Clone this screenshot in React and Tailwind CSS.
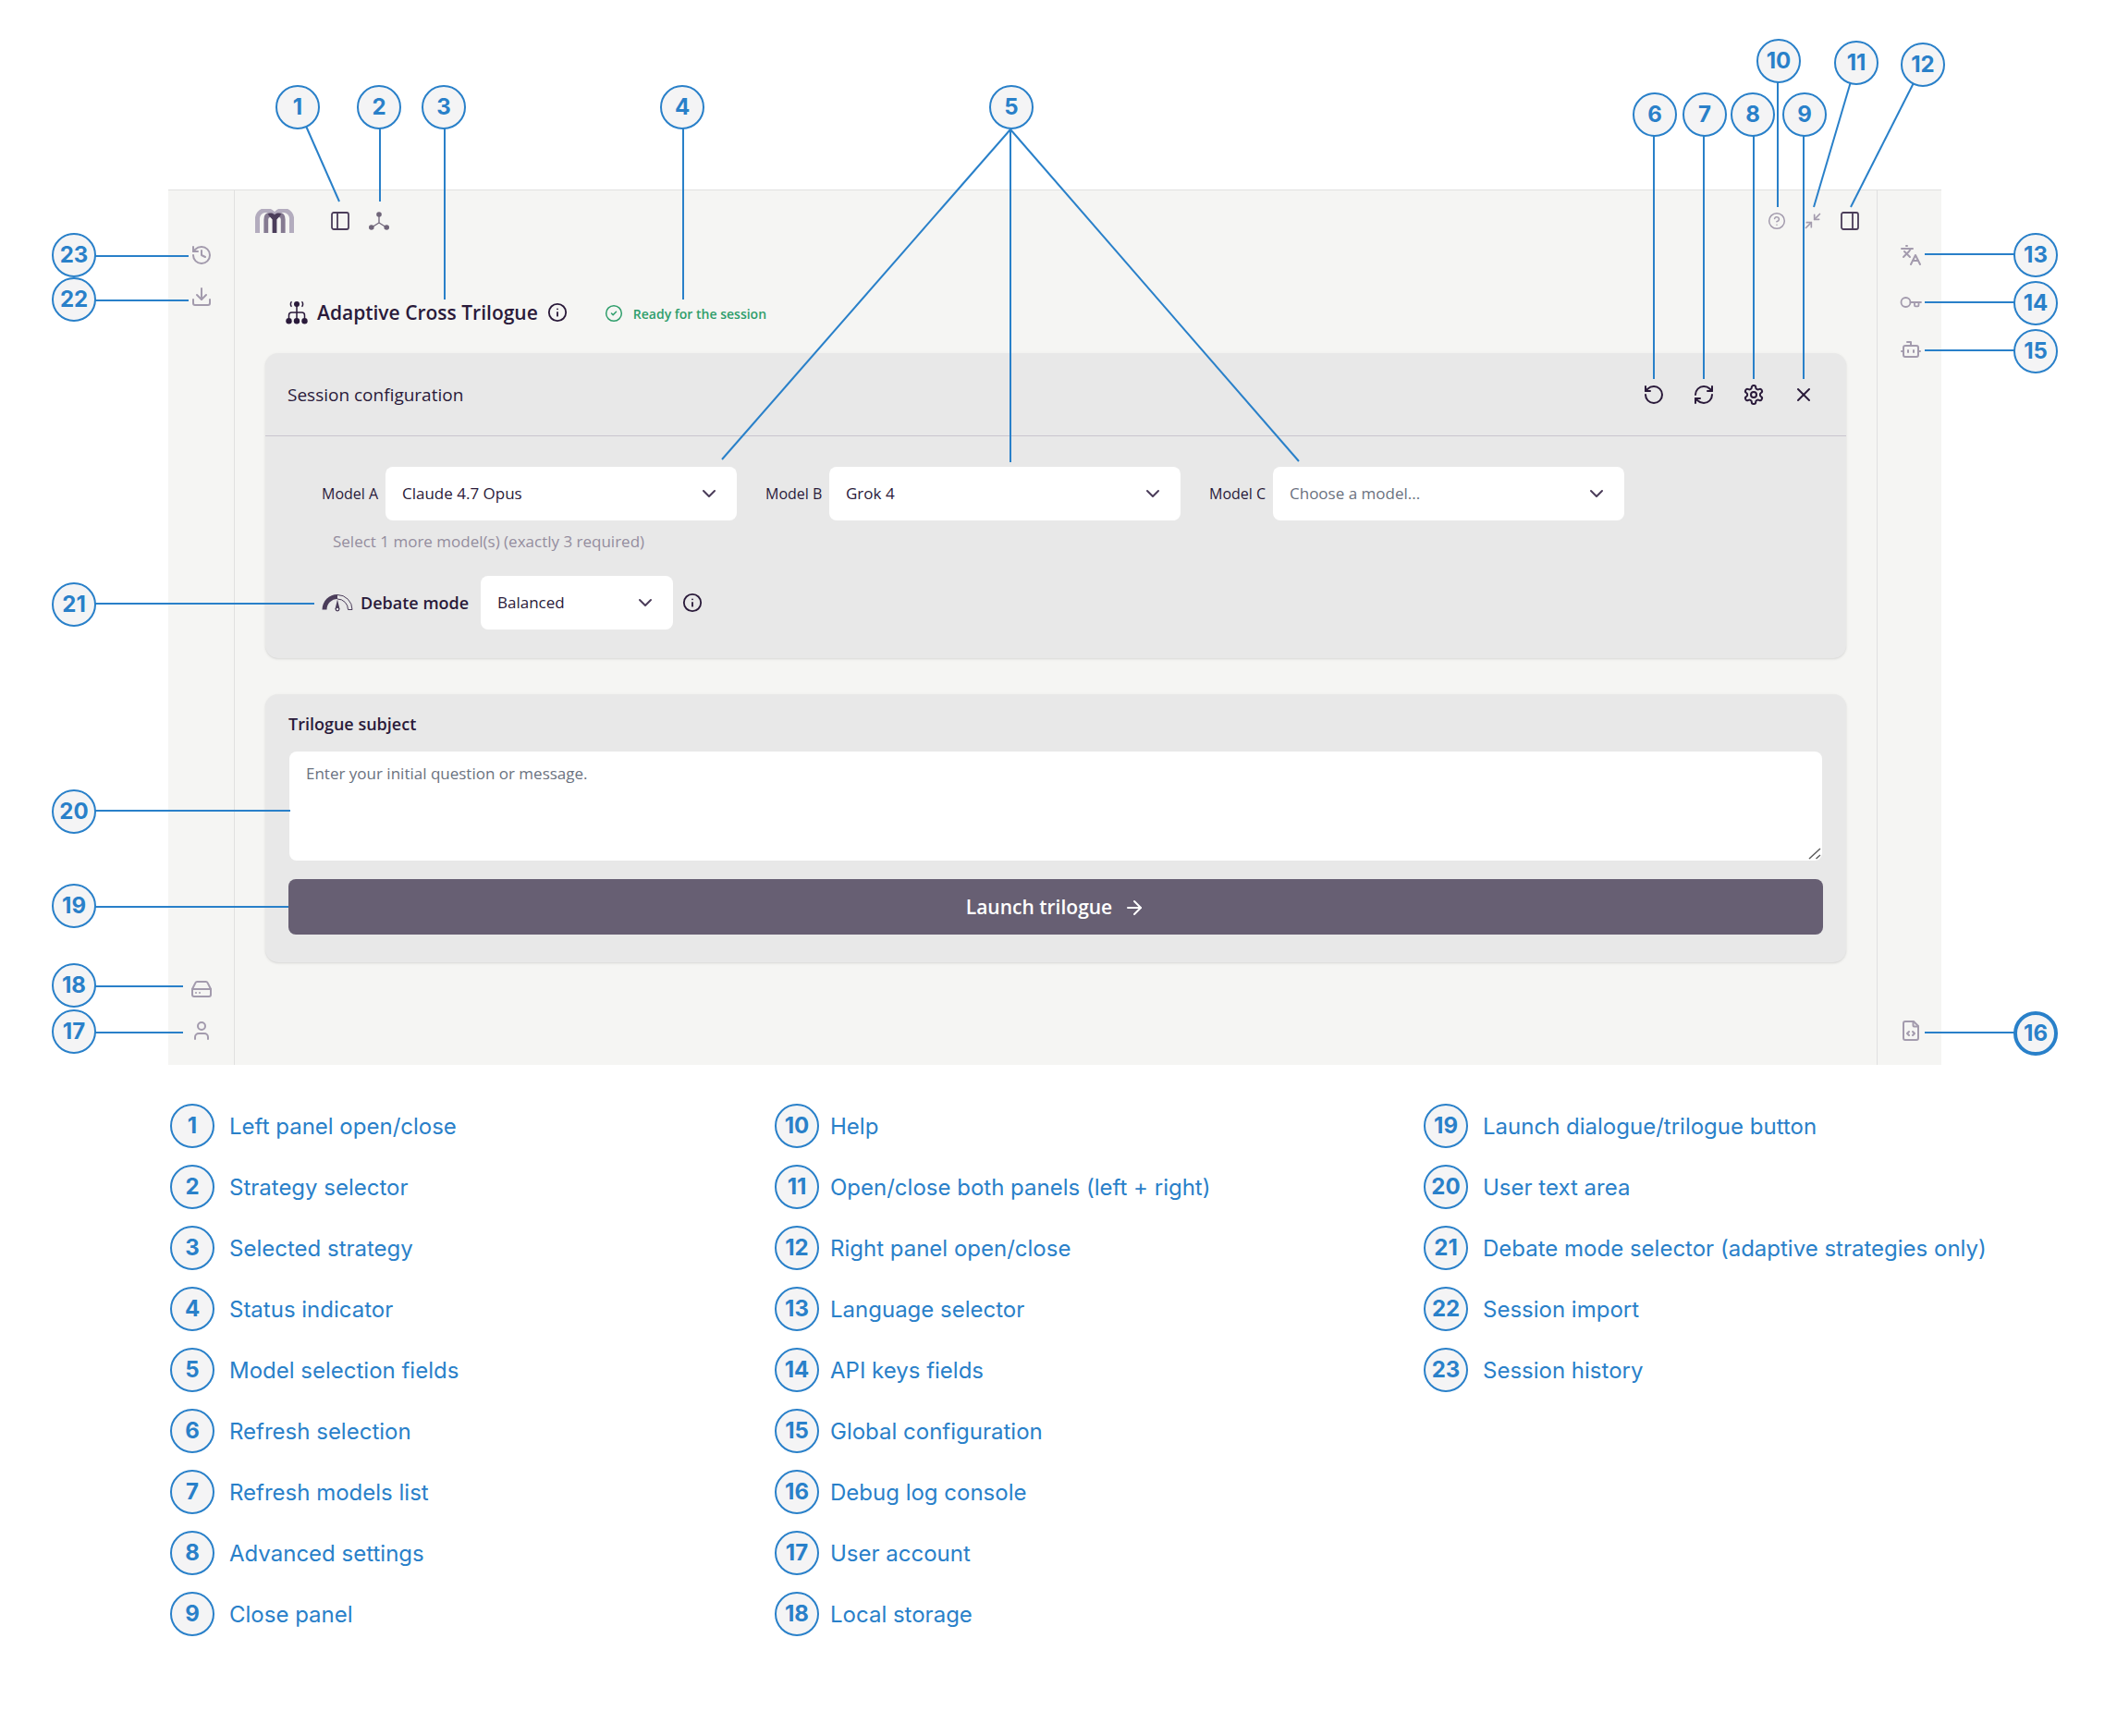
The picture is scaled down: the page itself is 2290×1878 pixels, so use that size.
import React from "react";
import {
  ArrowRight,
  Bot,
  ChevronDown,
  CircleCheck,
  CircleHelp,
  Download,
  HardDrive,
  History,
  Info,
  Languages,
  Minimize2,
  PanelLeft,
  PanelRight,
  RefreshCw,
  RotateCcw,
  User,
  X,
} from "lucide-react";

const LEGEND = [
  [
    [1, "Left panel open/close"],
    [2, "Strategy selector"],
    [3, "Selected strategy"],
    [4, "Status indicator"],
    [5, "Model selection fields"],
    [6, "Refresh selection"],
    [7, "Refresh models list"],
    [8, "Advanced settings"],
    [9, "Close panel"],
  ],
  [
    [10, "Help"],
    [11, "Open/close both panels (left + right)"],
    [12, "Right panel open/close"],
    [13, "Language selector"],
    [14, "API keys fields"],
    [15, "Global configuration"],
    [16, "Debug log console"],
    [17, "User account"],
    [18, "Local storage"],
  ],
  [
    [19, "Launch dialogue/trilogue button"],
    [20, "User text area"],
    [21, "Debate mode selector (adaptive strategies only)"],
    [22, "Session import"],
    [23, "Session history"],
  ],
];

/* Callouts: number, centre of the badge, and the ends of its leader lines. */
const CALLOUTS = [
  { n: 1, x: 322, y: 116, to: [[367, 218]] },
  { n: 2, x: 410, y: 116, to: [[411, 218]] },
  { n: 3, x: 480, y: 116, to: [[481, 324]] },
  { n: 4, x: 738, y: 116, to: [[739, 324]] },
  { n: 5, x: 1094, y: 116, from: [1093, 140], to: [[781, 497], [1093, 500], [1405, 499]] },
  { n: 6, x: 1790, y: 124, to: [[1789, 410]] },
  { n: 7, x: 1844, y: 124, to: [[1843, 410]] },
  { n: 8, x: 1896, y: 124, to: [[1897, 410]] },
  { n: 9, x: 1952, y: 124, to: [[1951, 410]] },
  { n: 10, x: 1924, y: 66, to: [[1923, 224]] },
  { n: 11, x: 2008, y: 68, to: [[1962, 224]] },
  { n: 12, x: 2080, y: 70, to: [[2002, 224]] },
  { n: 13, x: 2202, y: 276, to: [[2082, 275]] },
  { n: 14, x: 2202, y: 328, to: [[2082, 327]] },
  { n: 15, x: 2202, y: 380, to: [[2082, 379]] },
  { n: 16, x: 2202, y: 1118, to: [[2082, 1117]], strong: true },
  { n: 17, x: 80, y: 1116, to: [[198, 1117]] },
  { n: 18, x: 80, y: 1066, to: [[198, 1067]] },
  { n: 19, x: 80, y: 980, to: [[312, 981]] },
  { n: 20, x: 80, y: 878, to: [[314, 877]] },
  { n: 21, x: 80, y: 654, to: [[340, 653]] },
  { n: 22, x: 80, y: 324, to: [[204, 325]] },
  { n: 23, x: 80, y: 276, to: [[204, 277]] },
];

/* Start of a leader: straight out of the badge when the line is axis-aligned. */
function leaderStart({ x, y, from }, [tx, ty]) {
  if (from) return from;
  if (Math.abs(tx - x) <= 2) return [tx, y];
  if (Math.abs(ty - y) <= 2) return [x, ty];
  return [x, y];
}

function Badge({ n, strong = false }) {
  return (
    <span
      className={
        (strong ? "border-4" : "border-2") +
        " flex size-12 shrink-0 items-center justify-center rounded-full border-[#2980c9] bg-[#f4f4f5] text-2xl leading-none font-bold text-[#2980c9]"
      }
    >
      {n}
    </span>
  );
}

function Callouts() {
  return (
    <div className="pointer-events-none absolute inset-0 overflow-hidden">
      <svg className="absolute inset-0 size-full" fill="none" stroke="#2980c9" strokeWidth="2">
        {CALLOUTS.flatMap((c) =>
          c.to.map((end) => {
            const start = leaderStart(c, end);
            return (
              <line key={`${c.n}-${end[0]}`} x1={start[0]} y1={start[1]} x2={end[0]} y2={end[1]} />
            );
          })
        )}
      </svg>
      {CALLOUTS.map((c) => (
        <div key={c.n} className="absolute" style={{ left: c.x - 24, top: c.y - 24 }}>
          <Badge n={c.n} strong={c.strong} />
        </div>
      ))}
    </div>
  );
}

function Logo() {
  return (
    <svg viewBox="0 0 42 26" className="h-[26px] w-[42px]" fill="none" aria-label="Home">
      <g stroke="#b3acbe" strokeWidth="5">
        <path d="M2.5 26V12A9.2 9.2 0 0 1 21 9.5" />
        <path d="M39.5 26V12A9.2 9.2 0 0 0 21 9.5" />
      </g>
      <path d="M11.8 26V11.5C11.8 8 13.5 6.5 16 6.500S21 8.500 21 11" stroke="#857a91" strokeWidth="4.8" />
      <path d="M30.2 26V11.500C30.200 8 28.500 6.500 26 6.500S21 8.500 21 11" stroke="#857a91" strokeWidth="4.800" />
      <path d="M18.600 26V11.500L13.500 5.500C16.500 4 19.500 4.500 21 6.500C22.500 4.500 25.500 4 28.500 5.500L23.400 11.500V26Z" fill="#4b3d5a" />
    </svg>
  );
}

function StrategyIcon() {
  return (
    <svg viewBox="0 0 22 20" className="h-5 w-[22px]" fill="#6f6579" stroke="#6f6579">
      <path d="M11 3v9M11 12 3 17M11 12l8 5" strokeWidth="1.300" fill="none" />
      <g stroke="none">
        <circle cx="11" cy="3" r="2.800" />
        <circle cx="2.800" cy="17" r="2.800" />
        <circle cx="19.200" cy="17" r="2.800" />
      </g>
    </svg>
  );
}

function TrilogueIcon() {
  return (
    <svg viewBox="0 0 24 26" className="h-[26px] w-6" fill="none" stroke="#2a1a3a" strokeWidth="1.500">
      <path d="M12 4v18M3.500 21v-5a3 3 0 0 1 3-3h11a3 3 0 0 1 3 3v5" />
      <path d="M6.500 1.200C5 2.500 5 5.500 6.500 6.800M17.500 1.200C19 2.500 19 5.500 17.500 6.800" strokeWidth="1.500" />
      <g fill="#2a1a3a" stroke="none">
        <circle cx="12" cy="4" r="3" />
        <circle cx="3.500" cy="22.300" r="3.200" />
        <circle cx="12" cy="22.300" r="3.200" />
        <circle cx="20.500" cy="22.300" r="3.200" />
      </g>
    </svg>
  );
}

function GaugeIcon() {
  return (
    <svg viewBox="0 0 34 20" className="h-5 w-[34px]" fill="none" stroke="#4b3d5a">
      <path d="M.5 17.500A16.500 16.500 0 0 1 17 1V6A11.500 11.500 0 0 0 5.500 17.500Z" fill="#4b3d5a" stroke="none" />
      <path d="M17 1.500A16 16 0 0 1 33 17.500H28.500A11.500 11.500 0 0 0 17 6" />
      <path d="M17 6.500 14.600 16.500a2.400 2.400 0 1 0 4.800 0Z" fill="#4b3d5a" stroke="none" />
      <circle cx="17" cy="17" r="1.800" fill="#e8e8e8" strokeWidth="1.200" />
    </svg>
  );
}

function SettingsIcon() {
  return (
    <svg viewBox="0 0 24 24" className="size-6" fill="none" stroke="currentColor" strokeWidth="2" strokeLinecap="round" strokeLinejoin="round">
      <path d="M12.220 2h-.44a2 2 0 0 0-2 2v.18a2 2 0 0 1-1 1.730l-.43.25a2 2 0 0 1-2 0l-.15-.08a2 2 0 0 0-2.730.73l-.22.38a2 2 0 0 0 .73 2.730l.15.1a2 2 0 0 1 1 1.720v.51a2 2 0 0 1-1 1.740l-.15.09a2 2 0 0 0-.73 2.730l.22.38a2 2 0 0 0 2.730.73l.15-.08a2 2 0 0 1 2 0l.43.25a2 2 0 0 1 1 1.730V20a2 2 0 0 0 2 2h.44a2 2 0 0 0 2-2v-.18a2 2 0 0 1 1-1.730l.43-.25a2 2 0 0 1 2 0l.15.08a2 2 0 0 0 2.730-.73l.22-.39a2 2 0 0 0-.73-2.730l-.15-.08a2 2 0 0 1-1-1.740v-.5a2 2 0 0 1 1-1.740l.15-.09a2 2 0 0 0 .73-2.730l-.22-.38a2 2 0 0 0-2.730-.73l-.15.08a2 2 0 0 1-2 0l-.43-.25a2 2 0 0 1-1-1.730V4a2 2 0 0 0-2-2z" />
      <circle cx="12" cy="12" r="3" />
    </svg>
  );
}

function KeyIcon() {
  return (
    <svg viewBox="0 0 24 24" className="size-6" fill="none" stroke="currentColor" strokeWidth="1.800" strokeLinecap="round">
      <circle cx="6.500" cy="12" r="5" />
      <path d="M11.500 12H23M16 12v3.300a1 1 0 0 0 1 1h2.500a1 1 0 0 0 1-1V12" />
    </svg>
  );
}

function FileCodeIcon() {
  return (
    <svg viewBox="0 0 24 24" className="size-6" fill="none" stroke="currentColor" strokeWidth="2" strokeLinecap="round" strokeLinejoin="round">
      <path d="M15 2H6a2 2 0 0 0-2 2v16a2 2 0 0 0 2 2h12a2 2 0 0 0 2-2V7Z" />
      <path d="M14.500 2v4.500a1 1 0 0 0 1 1H20M10 13l-2 2 2 2M14 13l2 2-2 2" />
    </svg>
  );
}

function IconButton({ label, className = "", children }) {
  return (
    <button type="button" aria-label={label} className={"flex items-center justify-center " + className}>
      {children}
    </button>
  );
}

function Select({ id, value, muted = false, className = "" }) {
  return (
    <div className={"relative " + className}>
      <select
        id={id}
        defaultValue={value}
        className={
          (muted ? "text-[#6b7280]" : "text-[#2a1a3a]") +
          " h-[58px] w-full appearance-none rounded-lg bg-white pr-12 pl-[18px] text-[17px]"
        }
      >
        <option>{value}</option>
      </select>
      <ChevronDown
        className="pointer-events-none absolute top-[17px] right-[18px] size-6 text-[#4b3d5a]"
        strokeWidth={2}
      />
    </div>
  );
}

function ModelField({ name, value, muted }) {
  const id = "model-" + name.toLowerCase();
  return (
    <div className="flex items-center">
      <label htmlFor={id} className="w-[69px] shrink-0 text-base whitespace-nowrap">
        Model {name}
      </label>
      <Select id={id} value={value} muted={muted} className="flex-1" />
    </div>
  );
}

export default function App() {
  return (
    <div className="relative min-h-screen bg-white pt-[205px] pb-[102px] font-['Inter',sans-serif]">
      <div className="mr-[190px] ml-[182px] flex border-t border-[#e0e0e0] bg-[#f5f5f3] font-['Open_Sans',sans-serif] text-[#2a1a3a]">
        <aside className="flex w-[72px] shrink-0 flex-col items-center border-r border-[#e0e0e0] pt-[58px] pb-[25px] text-[#a39bad]">
          <IconButton label="Session history"><History /></IconButton>
          <IconButton label="Session import" className="mt-[21px]"><Download /></IconButton>
          <IconButton label="Local storage" className="mt-auto"><HardDrive /></IconButton>
          <IconButton label="User account" className="mt-[21px]"><User /></IconButton>
        </aside>

        <main className="min-w-0 flex-1 pb-[111px]">
          <header className="flex h-[66px] items-center justify-between pr-[17px] pl-[22px]">
            <div className="flex items-center">
              <Logo />
              <IconButton label="Left panel" className="ml-[38px] text-[#4b3d5a]"><PanelLeft strokeWidth={1.800} /></IconButton>
              <IconButton label="Strategy" className="ml-[19px]"><StrategyIcon /></IconButton>
            </div>
            <div className="flex items-center text-[#a39bad]">
              <IconButton label="Help"><CircleHelp size={20} strokeWidth={1.800} /></IconButton>
              <IconButton label="Toggle both panels" className="ml-[19px]"><Minimize2 size={20} strokeWidth={2} /></IconButton>
              <IconButton label="Right panel" className="ml-[18px] text-[#4b3d5a]"><PanelRight strokeWidth={1.800} /></IconButton>
            </div>
          </header>

          <div className="px-[33px]">
            <div className="mt-[46px] flex h-10 items-center pl-[22px]">
              <TrilogueIcon />
              <h1 className="ml-[10px] pt-0.5 text-[21px] font-semibold">Adaptive Cross Trilogue</h1>
              <IconButton label="About this strategy" className="ml-[10px]"><Info size={22} strokeWidth={2} /></IconButton>
              <p className="ml-[40px] flex items-center gap-[11px] pt-0.5 text-[14px] font-semibold text-[#2f9e6b]">
                <CircleCheck size={20} strokeWidth={1.800} />
                Ready for the session
              </p>
            </div>

            <section className="mt-[24px] rounded-[14px] bg-[#e8e8e8] shadow-sm">
              <div className="flex h-[90px] items-center justify-between border-b border-[#c9c5ce] px-6">
                <h2 className="pt-px text-[19px] font-medium">Session configuration</h2>
                <div className="flex gap-[10px]">
                  <IconButton label="Refresh selection" className="size-11"><RotateCcw /></IconButton>
                  <IconButton label="Refresh models list" className="size-11"><RefreshCw /></IconButton>
                  <IconButton label="Advanced settings" className="size-11"><SettingsIcon /></IconButton>
                  <IconButton label="Close panel" className="size-11"><X /></IconButton>
                </div>
              </div>
              <div className="px-[61px] pt-[33px] pb-[31px]">
                <div className="grid max-w-[1409px] grid-cols-3 gap-[31px]">
                  <ModelField name="A" value="Claude 4.7 Opus" />
                  <ModelField name="B" value="Grok 4" />
                  <ModelField name="C" value="Choose a model..." muted />
                </div>
                <p className="mt-[11px] ml-3 text-[17px] leading-6 text-[#948d9e]">
                  Select 1 more model(s) (exactly 3 required)
                </p>
                <div className="mt-[25px] flex items-center">
                  <GaugeIcon />
                  <label htmlFor="debate-mode" className="ml-[8px] w-[130px] text-[18px] font-semibold whitespace-nowrap">
                    Debate mode
                  </label>
                  <Select id="debate-mode" value="Balanced" className="w-[208px]" />
                  <IconButton label="About debate modes" className="ml-[10px]"><Info size={22} strokeWidth={2} /></IconButton>
                </div>
              </div>
            </section>

            <section className="mt-[39px] rounded-[14px] bg-[#e8e8e8] px-[25px] pt-5 pb-[30px] shadow-sm">
              <label htmlFor="subject" className="block text-[18px] leading-6 font-semibold">
                Trilogue subject
              </label>
              <div className="relative mx-px mt-[18px]">
                <textarea
                  id="subject"
                  placeholder="Enter your initial question or message."
                  className="block h-[118px] w-full resize-none rounded-lg bg-white px-[18px] py-3 text-[17px] leading-6 placeholder:text-[#6b7280]"
                />
                <svg viewBox="0 0 14 14" className="pointer-events-none absolute right-px bottom-px size-[14px]" fill="none" stroke="#5b5b5b" strokeWidth="1.500">
                  <path d="M1 13 13 2M8.500 13 13 9" />
                </svg>
              </div>
              <button
                type="button"
                className="mt-5 flex h-[60px] w-full items-center justify-center gap-3 rounded-lg bg-[#675f73] pt-0.5 text-[21px] font-semibold text-white"
              >
                Launch trilogue
                <ArrowRight size={24} strokeWidth={2} />
              </button>
            </section>
          </div>
        </main>

        <aside className="flex w-[70px] shrink-0 flex-col items-center border-l border-[#e0e0e0] pt-[58px] pb-[25px] pl-[2px] text-[#a39bad]">
          <IconButton label="Language"><Languages /></IconButton>
          <IconButton label="API keys" className="mt-[27px]"><KeyIcon /></IconButton>
          <IconButton label="Global configuration" className="mt-[27px]"><Bot /></IconButton>
          <IconButton label="Debug log console" className="mt-auto"><FileCodeIcon /></IconButton>
        </aside>
      </div>

      <div className="mt-[42px] grid grid-cols-[minmax(0,654fr)_minmax(0,702fr)_minmax(0,566fr)] px-[184px]">
        {LEGEND.map((column, i) => (
          <ul key={i} className="flex flex-col gap-[18px]">
            {column.map(([n, text]) => (
              <li
                key={n}
                className={(i === 1 ? "gap-3" : "gap-4") + " flex items-center text-2xl whitespace-nowrap text-[#2980c9]"}
              >
                <Badge n={n} />
                <span className="pt-0.5">{text}</span>
              </li>
            ))}
          </ul>
        ))}
      </div>

      <Callouts />
    </div>
  );
}
